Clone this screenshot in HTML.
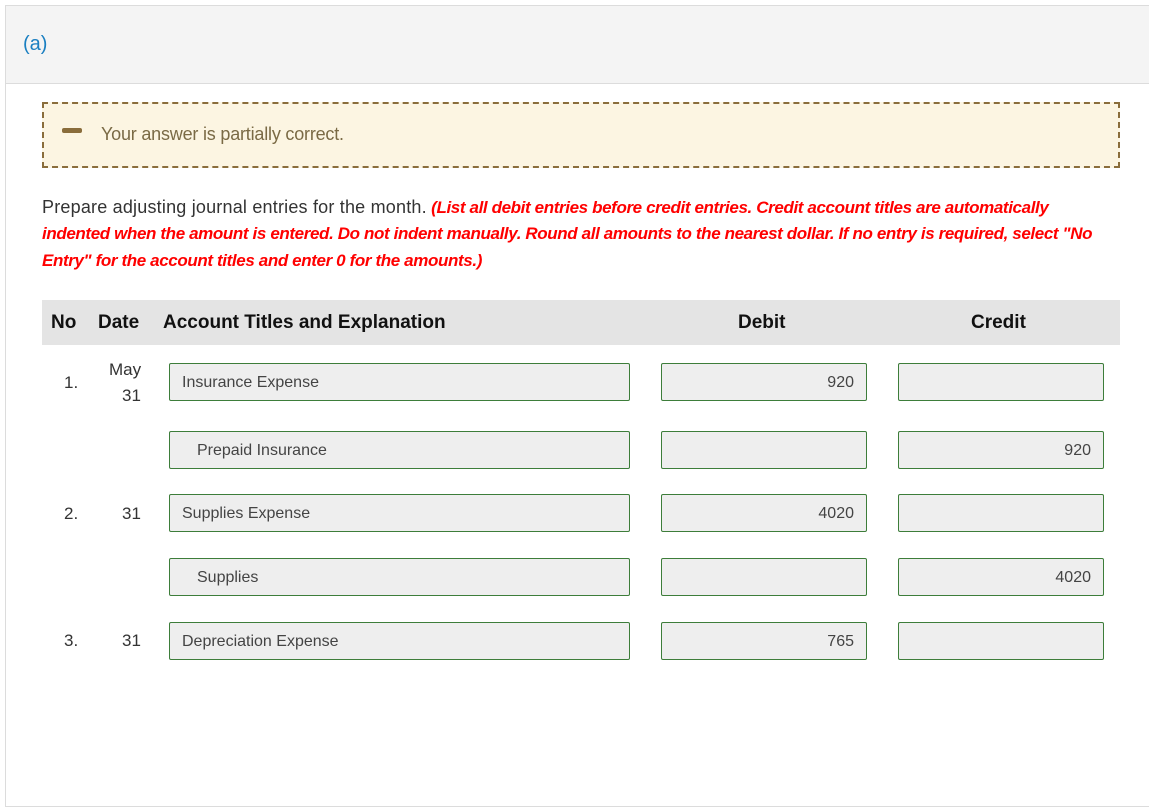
<!DOCTYPE html>
<html><head><meta charset="utf-8"><style>
body{margin:0;width:1149px;height:680px;background:#fff;font-family:"Liberation Sans",sans-serif;position:relative;overflow:hidden}
.abs{position:absolute}
.panel{left:5px;top:5px;width:1150px;height:800px;border:1px solid #dcdcdc;border-right:none}
.hdr{left:6px;top:6px;width:1143px;height:77px;background:#f4f4f4;border-bottom:1px solid #dcdcdc}
.a{left:23px;top:33px;font-size:20px;color:#1a7fc1}
.call{left:42px;top:102px;width:1074px;height:62px;border:2px dashed #8a6d3b;background:#fcf5e2}
.dash{left:62px;top:128px;width:20px;height:5px;background:#8a6d3b;border-radius:2px}
.ctext{left:101px;top:124px;font-size:18px;color:#7a6a45;letter-spacing:-0.2px}
.line{left:42px;font-size:17px;white-space:nowrap;letter-spacing:-0.38px}
.blk{color:#333;font-size:18px;letter-spacing:0.2px}
.red{color:#f00;font-weight:bold;font-style:italic}
.th{left:42px;top:300px;width:1078px;height:45px;background:#e4e4e4}
.h{top:312px;font-size:19px;font-weight:bold;color:#111;letter-spacing:0px}
.inp{height:38px;border:1px solid #3d7d3a;border-radius:2px;background:#eee;box-sizing:border-box;font-size:16px;color:#444;line-height:37px;letter-spacing:0px}
.acc{left:169px;width:461px;padding-left:12px}
.acc.ind{padding-left:27px}
.deb{left:661px;width:206px;text-align:right;padding-right:12px}
.cre{left:898px;width:206px;text-align:right;padding-right:12px}
.n{font-size:17px;color:#333}
</style></head><body>
<div class="abs panel"></div>
<div class="abs hdr"></div>
<div class="abs a">(a)</div>
<div class="abs call"></div>
<div class="abs dash"></div>
<div class="abs ctext">Your answer is partially correct.</div>
<div class="abs line" style="top:197px"><span class="blk">Prepare adjusting journal entries for the month.</span> <span class="red">(List all debit entries before credit entries. Credit account titles are automatically</span></div>
<div class="abs line red" style="top:224px">indented when the amount is entered. Do not indent manually. Round all amounts to the nearest dollar. If no entry is required, select "No</div>
<div class="abs line red" style="top:251px">Entry" for the account titles and enter 0 for the amounts.)</div>
<div class="abs th"></div>
<div class="abs h" style="left:51px">No</div>
<div class="abs h" style="left:98px">Date</div>
<div class="abs h" style="left:163px">Account Titles and Explanation</div>
<div class="abs h" style="left:738px">Debit</div>
<div class="abs h" style="left:971px">Credit</div>

<div class="abs n" style="left:64px;top:373px">1.</div>
<div class="abs n" style="left:109px;top:360px">May</div>
<div class="abs n" style="left:122px;top:386px">31</div>
<div class="abs inp acc" style="top:363px">Insurance Expense</div>
<div class="abs inp deb" style="top:363px">920</div>
<div class="abs inp cre" style="top:363px"></div>

<div class="abs inp acc ind" style="top:431px">Prepaid Insurance</div>
<div class="abs inp deb" style="top:431px"></div>
<div class="abs inp cre" style="top:431px">920</div>

<div class="abs n" style="left:64px;top:504px">2.</div>
<div class="abs n" style="left:122px;top:504px">31</div>
<div class="abs inp acc" style="top:494px">Supplies Expense</div>
<div class="abs inp deb" style="top:494px">4020</div>
<div class="abs inp cre" style="top:494px"></div>

<div class="abs inp acc ind" style="top:558px">Supplies</div>
<div class="abs inp deb" style="top:558px"></div>
<div class="abs inp cre" style="top:558px">4020</div>

<div class="abs n" style="left:64px;top:631px">3.</div>
<div class="abs n" style="left:122px;top:631px">31</div>
<div class="abs inp acc" style="top:622px">Depreciation Expense</div>
<div class="abs inp deb" style="top:622px">765</div>
<div class="abs inp cre" style="top:622px"></div>
</body></html>
